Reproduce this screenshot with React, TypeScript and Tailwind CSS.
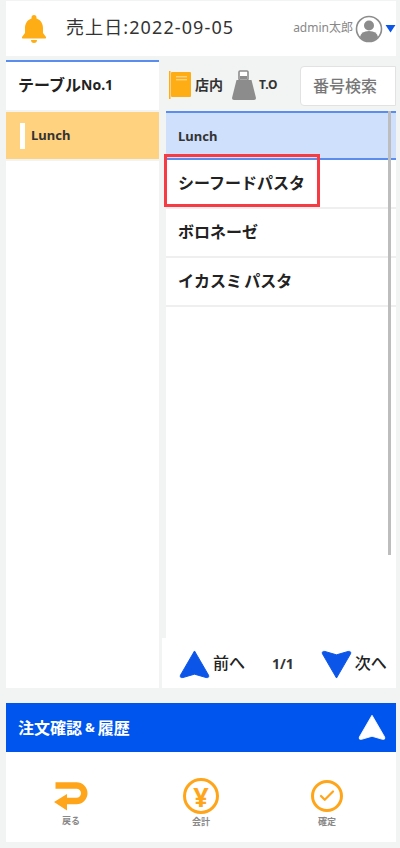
import React from 'react';
import { Check } from 'lucide-react';

const FONT = '[font-family:"Noto_Sans","Noto_Sans_CJK_JP",sans-serif]';

const Arrow = ({ className, down }: { className: string; down?: boolean }) => (
  <svg viewBox="0 0 32 30" className={className} style={down ? { transform: 'rotate(180deg)' } : undefined}>
    <path d="M16 1 L30.5 26 Q31.5 29 28 28.5 L16 25 L4 28.5 Q0.5 29 1.5 26 Z" fill="currentColor" stroke="currentColor" strokeWidth="1" strokeLinejoin="round" />
  </svg>
);

const items = ['シーフードパスタ', 'ボロネーゼ', 'イカスミ パスタ'];

const Header = () => (
  <header className="h-[55px] mt-px bg-white flex items-center pl-[14px] pr-0">
    <svg viewBox="0 0 28 30" className="w-[28px] h-[30px] text-[#ffad14] shrink-0">
      <path d="M14 1 a2.5 2.5 0 0 1 2.5 2.5 v1 C21 6 23 10 23 14 v5 l3 4 q0.5 1.5 -1 1.5 H3 q-1.5 0 -1 -1.5 l3 -4 v-5 C5 10 7 6 11.5 4.5 v-1 A2.5 2.5 0 0 1 14 1 Z M11 26 h6 a3 3 0 0 1 -6 0 Z" fill="currentColor" />
    </svg>
    <span className="ml-[18px] mb-[3px] text-[18px] leading-none tracking-[1.1px] text-[#333]">売上日:2022-09-05</span>
    <span className="ml-auto mb-[2px] text-[12px] text-[#888]">admin太郎</span>
    <svg viewBox="0 0 28 28" className="w-[28px] h-[28px] ml-[2px] text-[#8c8c8c] shrink-0">
      <circle cx="14" cy="14" r="12.5" fill="none" stroke="currentColor" strokeWidth="1.6" />
      <circle cx="14" cy="10.5" r="5" fill="currentColor" />
      <path d="M5 22 q1 -6 9 -6 t9 6 q-4 4.5 -9 4.5 t-9 -4.5 Z" fill="currentColor" />
    </svg>
    <svg viewBox="0 0 12 10" className="w-[11px] h-[9px] ml-[2px] text-[#0b55e8] shrink-0">
      <path d="M0.5 1 L11.5 1 L6 9.5 Z" fill="currentColor" />
    </svg>
  </header>
);

const LeftColumn = () => (
  <aside className="w-[153px] shrink-0 flex flex-col">
    <div className="h-[50px] bg-white border-t-2 border-[#5b8def] flex items-center pl-[12px] pb-[3px]">
      <span className="text-[16px] font-bold text-[#222]">テーブル</span>
      <span className="text-[14px] font-bold text-[#222]">No.1</span>
    </div>
    <div className="h-[47px] mt-[2px] bg-[#ffd27f] flex items-center pl-[14px]">
      <span className="w-[5px] h-[26px] bg-white" />
      <span className="ml-[6px] text-[13px] font-bold text-[#333]">Lunch</span>
    </div>
    <div className="flex-1 mt-[2px] bg-white" />
  </aside>
);

const Toolbar = () => (
  <div className="h-[51px] flex items-center pl-[2px]">
    <svg viewBox="0 0 24 28" className="w-[24px] h-[28px] mb-[2px] shrink-0">
      <rect x="1" y="0" width="1.5" height="28" fill="#ffad14" />
      <rect x="3" y="1" width="20" height="25" rx="1" fill="#ffad14" />
      <rect x="8" y="5" width="11" height="1.4" fill="#ffd27f" />
      <rect x="8" y="8" width="11" height="1.4" fill="#ffd27f" />
    </svg>
    <span className="ml-[3px] mb-[2px] text-[14px] font-bold text-[#333]">店内</span>
    <svg viewBox="0 0 24 30" className="w-[24px] h-[30px] ml-[9px] mb-[1px] shrink-0">
      <path d="M4.5 10 H19.5 L24 28 Q24 30 22 30 H2 Q0 30 0 28 Z" fill="#8c8c8c" />
      <rect x="7" y="1" width="9" height="9" rx="1" fill="#fff" stroke="#8c8c8c" strokeWidth="1.6" />
      <rect x="8" y="6" width="7" height="3" fill="#8c8c8c" />
    </svg>
    <span className="ml-[3px] mb-[2px] text-[12px] font-bold text-[#333]">T.O</span>
    <div className="ml-auto w-[96px] h-[40px] bg-white border border-[#e2e2e2] rounded-l-[4px] flex items-center pl-[12px]">
      <span className="text-[16px] font-medium text-[#777]">番号検索</span>
    </div>
  </div>
);

const MenuPane = () => (
  <div className="relative flex-1 flex flex-col bg-white">
    <div className="h-[49px] bg-[#cfe0fd] border-y-2 border-[#5b8def] flex items-center pl-[12px] pt-[2px]">
      <span className="text-[13px] font-bold text-[#333]">Lunch</span>
    </div>
    {items.map((name, i) => (
      <div key={name} className="relative h-[49px] border-b-2 border-[#efefef] flex items-center pl-[12px] pb-[2px]">
        <span className="text-[16px] font-bold text-[#222] [word-spacing:-2px]">{name}</span>
        {i === 0 && <span className="absolute left-[-2px] top-[-6px] w-[156px] h-[53px] border-[3px] border-[#f63b42]" />}
      </div>
    ))}
    <span className="absolute right-[5px] top-0 w-[3px] h-[444px] bg-[#bdbdbd]" />
  </div>
);

const Pagination = () => (
  <div className="h-[50px] -ml-[4px] bg-white flex items-center">
    <Arrow className="w-[31px] h-[29px] ml-[17px] mt-[3px] text-[#0b55e8]" />
    <span className="ml-[3px] text-[16px] font-medium text-[#222]">前へ</span>
    <span className="ml-[27px] text-[14px] font-bold text-[#333]">1/1</span>
    <Arrow down className="w-[31px] h-[29px] ml-[27px] mt-[3px] text-[#0b55e8]" />
    <span className="ml-[3px] text-[16px] font-medium text-[#222]">次へ</span>
  </div>
);

const OrderBar = () => (
  <div className="h-[49px] mt-[15px] bg-[#0055ee] flex items-center pl-[12px] pr-[10px]">
    <span className="text-[16px] font-bold text-white">注文確認</span>
    <span className="mx-[3px] text-[13px] font-bold text-white">&amp;</span>
    <span className="text-[16px] font-bold text-white">履歴</span>
    <Arrow className="w-[28px] h-[27px] ml-auto text-white" />
  </div>
);

const FooterButton = ({ label, icon }: { label: string; icon: React.ReactNode }) => (
  <div className="flex-1 flex flex-col items-center">
    <div className="h-[36px] flex items-center justify-center">{icon}</div>
    <span className="mt-[2px] text-[9px] font-bold leading-[12px] text-[#888]">{label}</span>
  </div>
);

const Footer = () => (
  <footer className="h-[90px] bg-white flex items-start pt-[26px] px-[6px]">
    <div className="flex-1 flex flex-col items-center -ml-[4px] mr-[4px]">
      <svg viewBox="0 0 34 29" className="w-[34px] h-[29px] mt-[4px] mb-[1px]">
        <path d="M1.5 3.5 H22.5 a7.75 7.75 0 0 1 0 15.5 H11" fill="none" stroke="#ffa51a" strokeWidth="6.5" />
        <path d="M0 20 L13 12 V28.5 Z" fill="#ffa51a" />
      </svg>
      <span className="mt-[3px] text-[9px] font-bold leading-[12px] text-[#888]">戻る</span>
    </div>
    <FooterButton
      label="会計"
      icon={
        <div className="w-[36px] h-[36px] rounded-full border-[3px] border-[#ffa51a] flex items-center justify-center">
          <span className="text-[27px] font-bold leading-none text-[#ffa51a]">¥</span>
        </div>
      }
    />
    <FooterButton
      label="確定"
      icon={
        <div className="w-[32px] h-[32px] rounded-full border-[3px] border-[#ffa51a] flex items-center justify-center">
          <Check className="w-[18px] h-[18px] text-[#ffa51a]" strokeWidth={3} />
        </div>
      }
    />
  </footer>
);

export default function App() {
  return (
    <div className={`${FONT} w-[400px] h-[848px] bg-[#f2f3f3] px-[6px] pb-[6px] pr-[4px] flex flex-col overflow-hidden`}>
      <Header />
      <div className="flex-1 flex mt-[4px] gap-[7px] min-h-0">
        <LeftColumn />
        <div className="flex-1 flex flex-col min-w-0">
          <Toolbar />
          <MenuPane />
          <Pagination />
        </div>
      </div>
      <OrderBar />
      <Footer />
    </div>
  );
}
